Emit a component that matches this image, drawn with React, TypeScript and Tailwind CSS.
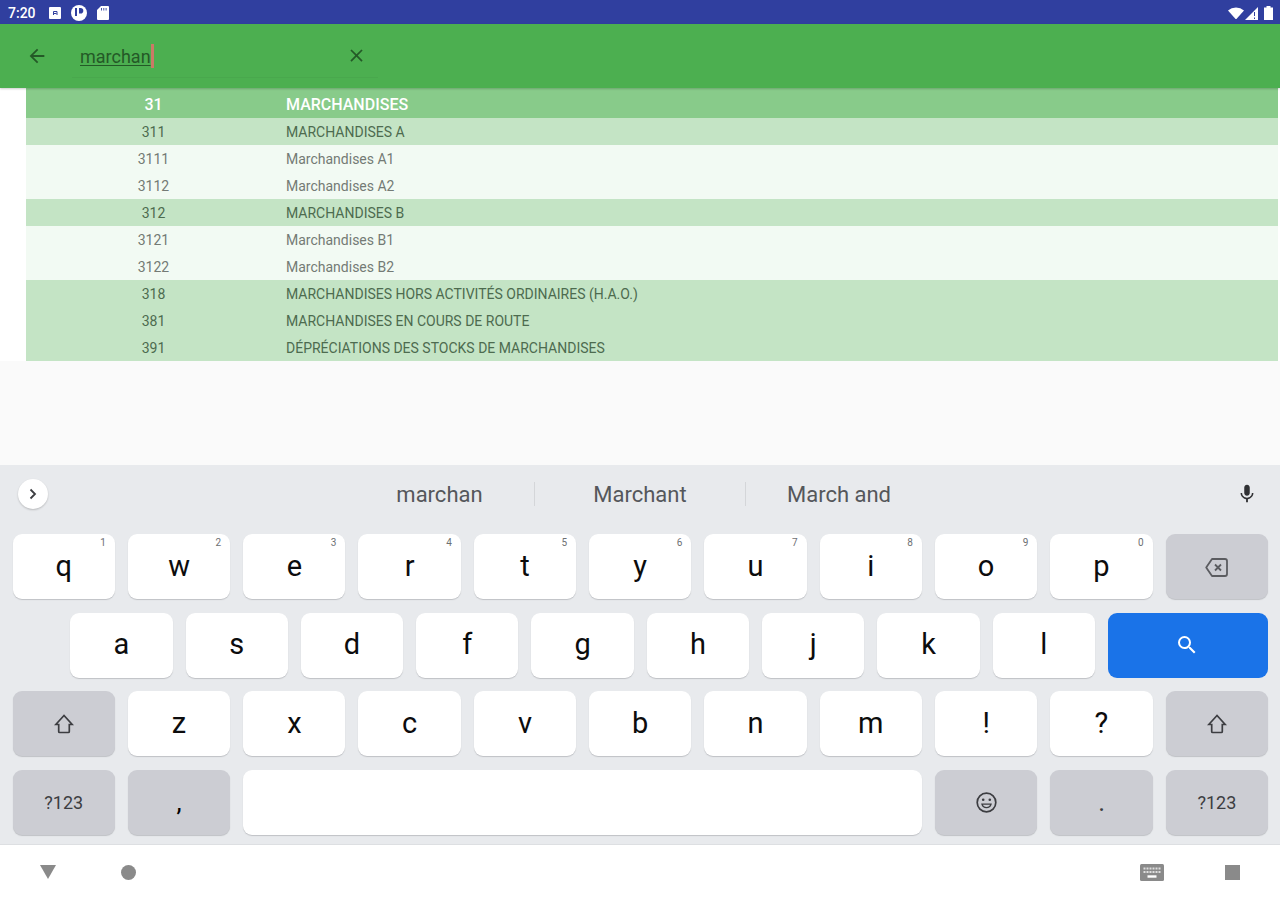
import React from "react";
import { MdArrowBack, MdClose, MdMic, MdSearch } from "react-icons/md";
import clsx from "clsx";

type Account = {
  code: string;
  label: string;
  level: 2 | 3 | 4;
};

const accounts: Account[] = [
  { code: "31", label: "MARCHANDISES", level: 2 },
  { code: "311", label: "MARCHANDISES A", level: 3 },
  { code: "3111", label: "Marchandises A1", level: 4 },
  { code: "3112", label: "Marchandises A2", level: 4 },
  { code: "312", label: "MARCHANDISES B", level: 3 },
  { code: "3121", label: "Marchandises B1", level: 4 },
  { code: "3122", label: "Marchandises B2", level: 4 },
  { code: "318", label: "MARCHANDISES HORS ACTIVITÉS ORDINAIRES (H.A.O.)", level: 3 },
  { code: "381", label: "MARCHANDISES EN COURS DE ROUTE", level: 3 },
  { code: "391", label: "DÉPRÉCIATIONS DES STOCKS DE MARCHANDISES", level: 3 },
];

const rowStyles = {
  2: "h-[30px] pt-[3px] bg-[#88cb8a] text-white text-[16px] font-medium",
  3: "h-[27px] pt-[2px] bg-[#c4e4c5] text-[#4d6b4f] text-[14px]",
  4: "h-[27px] pt-[2px] bg-[#f2faf3] text-[#747a75] text-[14px]",
};

function StatusBar() {
  return (
    <div className="flex h-6 items-center justify-between bg-[#303f9f] pl-2 pr-[7px] pt-[2px] text-white">
      <div className="flex items-center">
        <span className="w-[41px] text-[14px] font-medium leading-none">7:20</span>
        <svg className="h-3 w-3" viewBox="0 0 12 12">
          <rect width="12" height="12" rx="1" fill="currentColor" />
          <path d="M4.500 8V4.500h3.500V8M5 6.500h2.500" fill="none" stroke="#303f9f" strokeWidth="1" />
        </svg>
        <svg className="ml-[10px] h-4 w-4" viewBox="0 0 16 16">
          <circle cx="8" cy="8" r="8" fill="currentColor" />
          <path d="M5 3v8" stroke="#303f9f" strokeWidth="2" />
          <path d="M8 3h1.500a2.800 2.800 0 0 1 0 5.600H8z" fill="#303f9f" />
        </svg>
        <svg className="ml-[10px] h-[14px] w-3" viewBox="0 0 12 14">
          <path d="M4 0h7a1 1 0 0 1 1 1v12a1 1 0 0 1-1 1H1a1 1 0 0 1-1-1V4z" fill="currentColor" />
          <path d="M4.500 2v2.500M6.800 2v2.500M9.100 2v2.500" stroke="#303f9f" strokeWidth="0.900" />
        </svg>
      </div>
      <div className="flex items-center">
        <svg className="h-3 w-4" viewBox="0 0 16 12">
          <path d="M0 3.500a12 12 0 0 1 16 0L8 12.500z" fill="currentColor" />
        </svg>
        <svg className="ml-[1px] h-[13px] w-[13px]" viewBox="0 0 13 13">
          <path d="M0 13L13 0v13z" fill="currentColor" />
          <path d="M9.500 5v4M9.500 10.500v1.500" stroke="#303f9f" strokeWidth="1" />
        </svg>
        <svg className="ml-[6px] h-[14px] w-[9px]" viewBox="0 0 9 14">
          <path d="M2.500 0h4v1.500H9V14H0V1.500h2.500z" fill="currentColor" />
        </svg>
      </div>
    </div>
  );
}

function SearchBar() {
  return (
    <div className="relative z-10 flex h-16 items-center bg-[#4caf50] pl-[26px] shadow-[0_1px_2px_rgba(0,0,0,0.2)]">
      <MdArrowBack className="h-[22px] w-[22px] text-[#245927]" />
      <div className="ml-6 flex h-[44px] w-[306px] items-center justify-between border-b border-[#49a84d] pl-[8px] pr-[11px]">
        <div className="flex items-center">
          <span className="pt-[2px] text-[18px] leading-6 text-[#245927] underline underline-offset-2 decoration-1">
            marchan
          </span>
          <span className="h-6 w-[3px] bg-[#cb7a66]" />
        </div>
        <MdClose className="h-[21px] w-[21px] text-[#245927]" />
      </div>
    </div>
  );
}

function AccountTable() {
  return (
    <div className="bg-white pl-[26px] pr-[2px]">
      {accounts.map((a) => (
        <div key={a.code} className={clsx("flex items-center", rowStyles[a.level])}>
          <div className="w-[255px] text-center">{a.code}</div>
          <div className="pl-[5px]">{a.label}</div>
        </div>
      ))}
    </div>
  );
}

type KeyProps = {
  children?: React.ReactNode;
  hint?: string;
  variant?: "letter" | "action" | "search";
  className?: string;
};

function Key({ children, hint, variant = "letter", className = "w-[102.3px]" }: KeyProps) {
  return (
    <div
      className={clsx(
        "relative flex h-[65px] shrink-0 items-center justify-center rounded-[9px]",
        variant === "letter" && "bg-white text-[29px] text-[#0c0c0d] shadow-[0_1px_1px_#bfc1c5]",
        variant === "action" && "bg-[#cccdd3] text-[18px] text-[#3c3d41] shadow-[0_1px_1px_#bfc1c5]",
        variant === "search" && "bg-[#1a73e8] text-white",
        className
      )}
    >
      {children}
      {hint && <span className="absolute right-[9px] top-[4px] text-[10px] leading-none text-[#6d6f73]">{hint}</span>}
    </div>
  );
}

function BackspaceIcon() {
  return (
    <svg className="mt-[2px] h-[19px] w-[23px]" viewBox="0 0 23 19" fill="none" stroke="#5b5c60" strokeWidth="1.800">
      <path d="M7 1h13a2 2 0 0 1 2 2v13a2 2 0 0 1-2 2H7L1.200 9.500z" strokeLinejoin="round" />
      <path d="M10 6.500l6 6M16 6.500l-6 6" />
    </svg>
  );
}

function ShiftIcon() {
  return (
    <svg className="mt-[1px] h-5 w-5" viewBox="0 0 20 20" fill="none" stroke="currentColor" strokeWidth="1.700">
      <path d="M10 1.500L1.800 10.500H4.700V17.500a1 1 0 0 0 1 1h8.600a1 1 0 0 0 1-1V10.500h2.900z" />
    </svg>
  );
}

function SmileyIcon() {
  return (
    <svg className="h-[21px] w-[21px]" viewBox="0 0 21 21" fill="none" stroke="currentColor" strokeWidth="1.700">
      <circle cx="10.500" cy="10.500" r="9.300" />
      <path d="M6 12.200h9a4.700 4.700 0 0 1-9 0z" strokeWidth="1.300" />
      <circle cx="7.200" cy="7.800" r="1.300" fill="currentColor" stroke="none" />
      <circle cx="13.800" cy="7.800" r="1.300" fill="currentColor" stroke="none" />
    </svg>
  );
}

function Keyboard() {
  const topRow = ["q", "w", "e", "r", "t", "y", "u", "i", "o", "p"];
  const homeRow = ["a", "s", "d", "f", "g", "h", "j", "k", "l"];
  const bottomRow = ["z", "x", "c", "v", "b", "n", "m", "!", "?"];

  return (
    <div className="h-[380px] border-b border-[#dddfe2] bg-[#e8eaed]">
      {/* Suggestion strip */}
      <div className="flex h-[69px] items-center pb-[12px] text-[22px] text-[#55575b]">
        <div className="ml-[18px] flex h-[30px] w-[30px] items-center justify-center rounded-full bg-white shadow-[0_1px_2px_rgba(0,0,0,0.2)]">
          <svg className="h-3 w-3" viewBox="0 0 12 12" fill="none" stroke="#3c3d41" strokeWidth="1.800">
            <path d="M3.500 1.500L8 6l-4.500 4.500" />
          </svg>
        </div>
        <div className="ml-[297px] flex w-[189px] justify-center pt-[2px]">marchan</div>
        <div className="h-6 w-px bg-[#d4d6d9]" />
        <div className="flex w-[210px] justify-center pt-[2px]">Marchant</div>
        <div className="h-6 w-px bg-[#d4d6d9]" />
        <div className="flex w-[186px] justify-center pt-[2px]">March and</div>
        <MdMic className="ml-auto mr-[22px] h-[22px] w-[22px] text-[#303134]" />
      </div>

      <div className="flex flex-col gap-[13.7px] pl-[12.6px]">
        <div className="flex gap-[13px]">
          {topRow.map((k, i) => (
            <Key key={k} hint={String((i + 1) % 10)}>
              {k}
            </Key>
          ))}
          <Key variant="action">
            <BackspaceIcon />
          </Key>
        </div>
        <div className="flex gap-[13px] pl-[57.7px]">
          {homeRow.map((k) => (
            <Key key={k}>{k}</Key>
          ))}
          <Key variant="search" className="w-[160px]">
            <MdSearch className="mr-[2px] h-6 w-6" />
          </Key>
        </div>
        <div className="flex gap-[13px]">
          <Key variant="action">
            <ShiftIcon />
          </Key>
          {bottomRow.map((k) => (
            <Key key={k}>{k}</Key>
          ))}
          <Key variant="action">
            <ShiftIcon />
          </Key>
        </div>
        <div className="flex gap-[13px]">
          <Key variant="action">?123</Key>
          <Key variant="action">
            <span className="text-[26px] text-black">,</span>
          </Key>
          <Key className="w-[679px]" />
          <Key variant="action">
            <SmileyIcon />
          </Key>
          <Key variant="action">
            <span className="text-[26px]">.</span>
          </Key>
          <Key variant="action">?123</Key>
        </div>
      </div>
    </div>
  );
}

function NavigationBar() {
  return (
    <div className="flex h-[55px] items-center bg-white text-[#8a8a8a]">
      <svg className="ml-10 h-4 w-4" viewBox="0 0 16 16">
        <path d="M0 0h16L8 14z" fill="currentColor" />
      </svg>
      <div className="ml-[65px] h-[15px] w-[15px] rounded-full bg-[#8a8a8a]" />
      <svg className="ml-auto h-[17px] w-6" viewBox="0 0 24 17" fill="none">
        <rect width="24" height="17" rx="1.500" fill="currentColor" />
        <path d="M3.500 4.500h17M3.500 8h17" stroke="#dedede" strokeWidth="2" strokeDasharray="2 1" />
        <path d="M7.500 12.500h9" stroke="#fff" strokeWidth="2.400" />
      </svg>
      <div className="ml-[61px] mr-10 h-[15px] w-[15px] bg-[#8a8a8a]" />
    </div>
  );
}

export default function App() {
  return (
    <div className="flex h-[900px] w-[1280px] flex-col overflow-hidden bg-[#fafafa] font-['Roboto',sans-serif]">
      <StatusBar />
      <SearchBar />
      <AccountTable />
      <div className="flex-1" />
      <Keyboard />
      <NavigationBar />
    </div>
  );
}
